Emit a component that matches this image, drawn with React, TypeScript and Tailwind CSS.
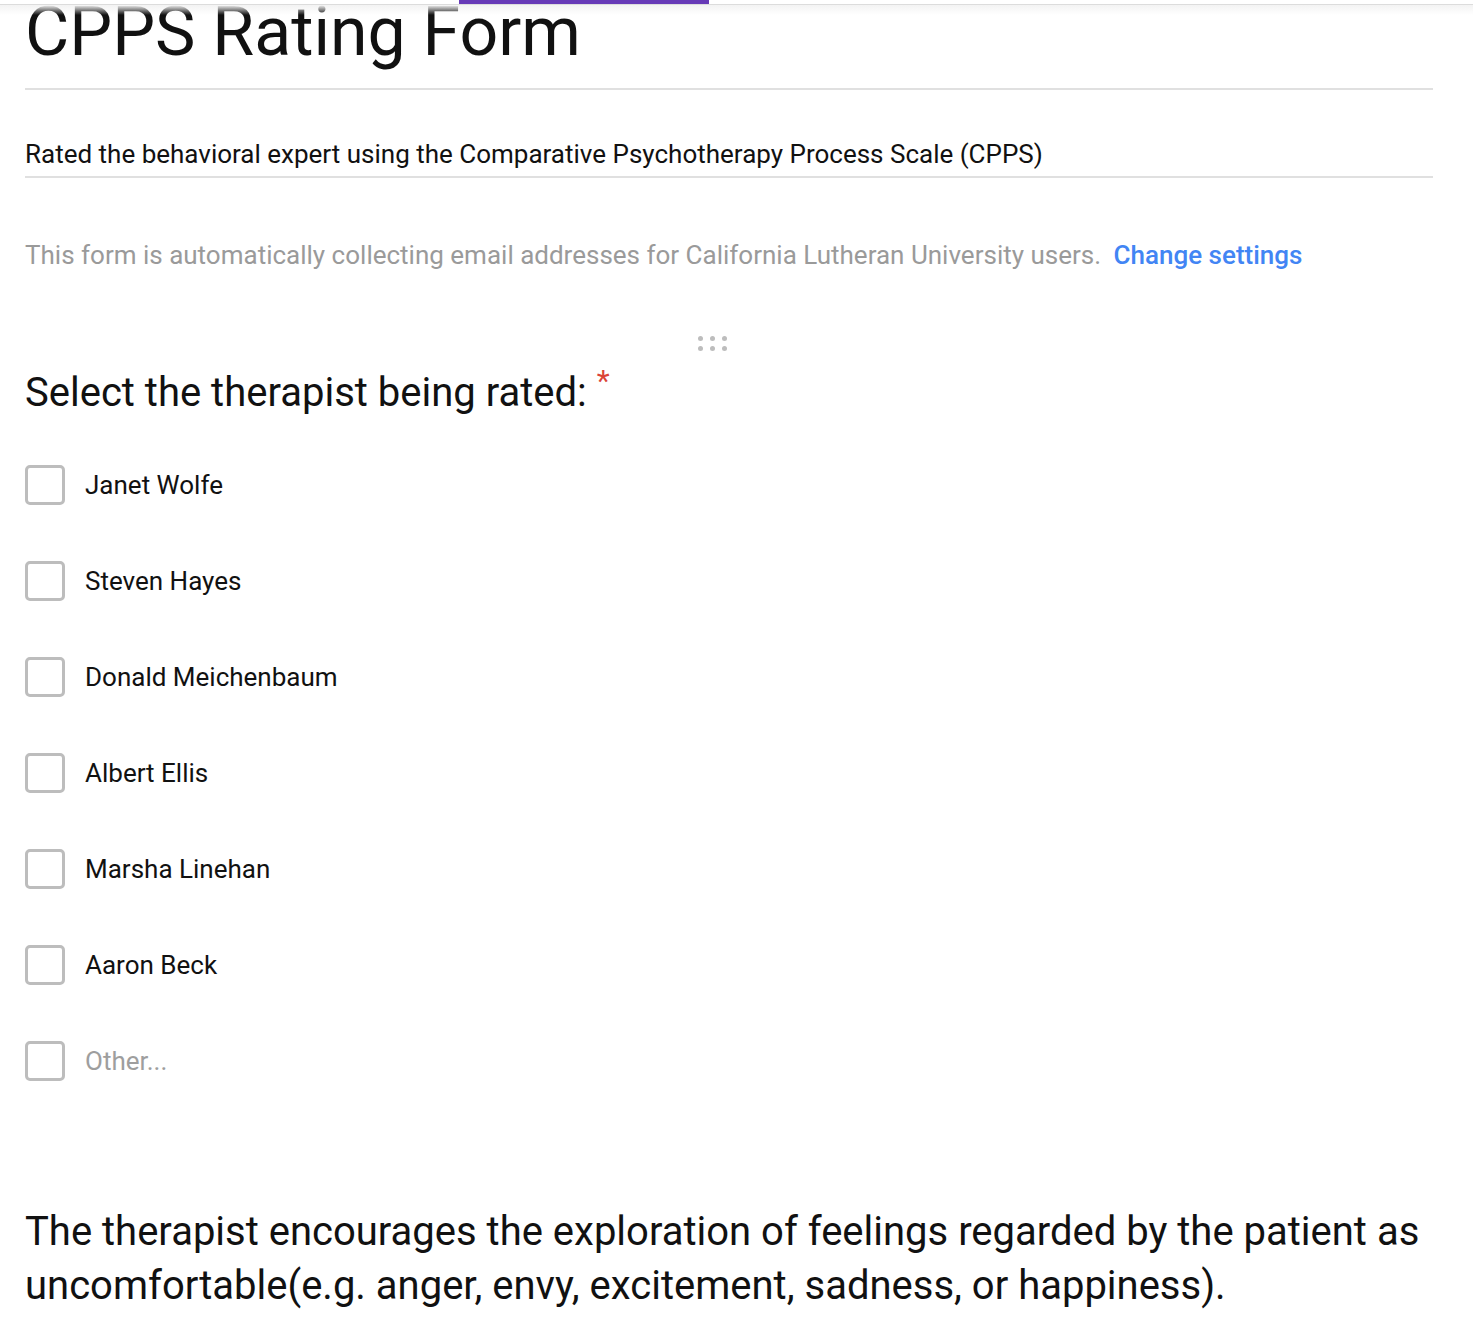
import React from "react";

const options = [
  "Janet Wolfe",
  "Steven Hayes",
  "Donald Meichenbaum",
  "Albert Ellis",
  "Marsha Linehan",
  "Aaron Beck",
];

function Checkbox() {
  return <div className="h-[40px] w-[40px] shrink-0 rounded-[5px] border-[3px] border-[#bdbdbd] bg-white" />;
}

export default function App() {
  return (
    <div className="relative min-h-[1338px] bg-white font-['Roboto','Liberation_Sans',sans-serif] text-[#111]">
      <div className="absolute left-0 right-0 top-0 z-10">
        <div className="h-[4px] pl-[459px]">
          <div className="h-full w-[250px] bg-[#673ab7]" />
        </div>
        <div className="h-[1px] bg-[#dcdcdc]" />
        <div className="h-[10px] bg-gradient-to-b from-[#f3f3f3] to-transparent" />
      </div>

      <div className="pl-[25px] pr-[40px]">
        <h1 className="text-[68px] leading-[64px] font-normal">CPPS Rating Form</h1>
        <div className="mt-[24px] h-[2px] bg-[#e0e0e0]" />
        <p className="mt-[49px] text-[26px] leading-[30px]">
          Rated the behavioral expert using the Comparative Psychotherapy Process Scale (CPPS)
        </p>
        <div className="mt-[7px] h-[2px] bg-[#e0e0e0]" />
        <p className="mt-[62px] text-[26px] leading-[30px] text-[#9a9a9a]">
          This form is automatically collecting email addresses for California Lutheran University users.{" "}
          <span className="ml-[6px] font-medium text-[#4285f4]">Change settings</span>
        </p>

        <div className="mt-[66px] flex h-[15px] justify-center">
          <div className="ml-[-34px] grid grid-cols-3 gap-x-[7px] gap-y-[5px]">
            {Array.from({ length: 6 }).map((_, i) => (
              <div key={i} className="h-[5px] w-[5px] rounded-full bg-[#bdbdbd]" />
            ))}
          </div>
        </div>

        <h2 className="mt-[17px] text-[40px] leading-[50px] font-normal">
          Select the therapist being rated:
          <span className="relative top-[-15px] ml-[10px] text-[30px] leading-none text-[#db4437]">*</span>
        </h2>

        <div className="mt-[47px] flex flex-col gap-[56px]">
          {options.map((o) => (
            <div key={o} className="flex h-[40px] items-center gap-[20px]">
              <Checkbox />
              <span className="text-[26px] leading-[30px]">{o}</span>
            </div>
          ))}
          <div className="flex h-[40px] items-center gap-[20px]">
            <Checkbox />
            <span className="text-[26px] leading-[30px] text-[#9e9e9e]">Other...</span>
          </div>
        </div>

        <p className="mt-[124px] text-[40px] leading-[54px]">
          The therapist encourages the exploration of feelings regarded by the patient as uncomfortable(e.g. anger, envy, excitement, sadness, or happiness).
        </p>
      </div>
    </div>
  );
}
